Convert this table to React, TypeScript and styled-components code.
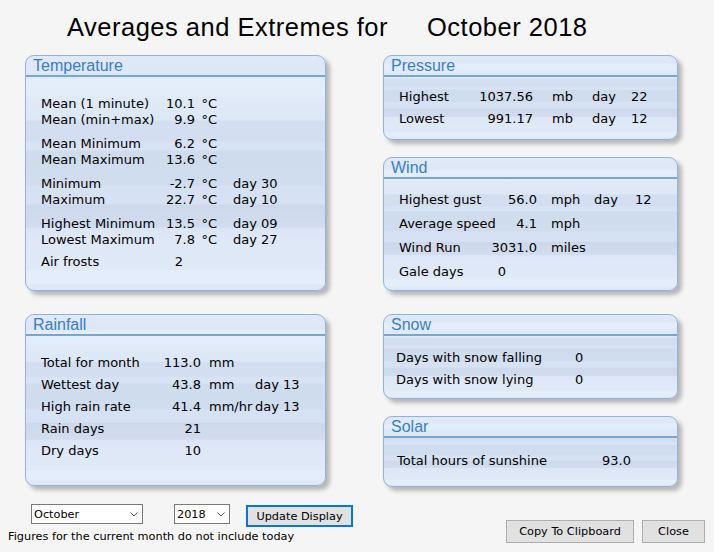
import React from "react";
import styled, { createGlobalStyle } from "styled-components";

const Global = createGlobalStyle`
  html, body { margin: 0; padding: 0; background: #f5f5f5; }
  body { font-family: "DejaVu Sans", Verdana, sans-serif; color: #000; }
  * { box-sizing: border-box; }
`;

const Page = styled.div`
  width: 714px;
  height: 552px;
  overflow: hidden;
`;

const Title = styled.h1`
  margin: 0;
  height: 55px;
  padding: 12px 0 0 67px;
  font-family: "Liberation Sans", Arial, sans-serif;
  font-weight: normal;
  font-size: 25.5px;
  line-height: 30px;
  letter-spacing: 0.5px;
  white-space: nowrap;
  color: #000;
`;

const TitleDate = styled.span`
  margin-left: 39px;
`;

const Columns = styled.div`
  display: grid;
  grid-template-columns: 301px 295px;
  column-gap: 57px;
  padding-left: 25px;
  align-items: start;
`;

const Column = styled.div`
  display: flex;
  flex-direction: column;
  gap: 23px;
`;

const Stack = styled.div`
  display: flex;
  flex-direction: column;
  gap: 17px;
`;

const Panel = styled.section<{ $h: number }>`
  height: ${(p) => p.$h}px;
  border: 1px solid #8db3df;
  border-radius: 9px;
  overflow: hidden;
  box-shadow: 4px 4px 4px rgba(0, 0, 0, 0.26);
  background: linear-gradient(
    180deg,
    #e0e9f8 0%,
    #dde7f6 8%,
    #e4eefa 10%,
    #e1edf9 17%,
    #dfe9f8 18%,
    #dde8f7 27%,
    #d3dff0 28%,
    #d3dff0 36%,
    #d8e3f5 37%,
    #d8e3f5 40%,
    #cfdcee 41%,
    #d0ddee 55%,
    #d6e2f4 56%,
    #d6e2f4 63%,
    #cdd9eb 64%,
    #d1ddef 73%,
    #dbe6f6 74%,
    #dfe8f7 80%,
    #e0e9f8 91%,
    #e3eefa 92%,
    #e3eefa 97%,
    #dfe8f7 98%
  );
`;

const PanelHead = styled.h2`
  margin: 0;
  height: 21px;
  padding-left: 7px;
  border-bottom: 2px solid #76a6d3;
  font-family: "Liberation Sans", Arial, sans-serif;
  font-weight: normal;
  font-size: 16px;
  line-height: 19px;
  color: #3a7ec4;
  white-space: nowrap;
`;

const PanelBody = styled.div<{ $pt: number; $pl: number }>`
  padding: ${(p) => p.$pt}px 0 0 ${(p) => p.$pl}px;
  font-size: 13px;
  color: #000;
`;

const Row = styled.div<{ $cols: string; $h: number; $gap?: number }>`
  display: grid;
  grid-template-columns: ${(p) => p.$cols};
  height: ${(p) => p.$h}px;
  line-height: ${(p) => p.$h}px;
  margin-top: ${(p) => p.$gap ?? 0}px;
  white-space: nowrap;
`;

const Cell = styled.span<{ $right?: boolean; $pl?: number; $pr?: number }>`
  text-align: ${(p) => (p.$right ? "right" : "left")};
  padding-left: ${(p) => p.$pl ?? 0}px;
  padding-right: ${(p) => p.$pr ?? 0}px;
`;

const Footer = styled.div`
  display: flex;
  justify-content: space-between;
  align-items: flex-start;
  margin-top: 17px;
  padding: 0 9px 0 8px;
`;

const FooterLeft = styled.div`
  display: flex;
  flex-direction: column;
`;

const Controls = styled.div`
  display: flex;
  align-items: flex-start;
  margin-left: 23px;
`;

const SelectWrap = styled.div<{ $w: number; $mr: number }>`
  position: relative;
  width: ${(p) => p.$w}px;
  height: 20px;
  margin-right: ${(p) => p.$mr}px;
`;

const NativeSelect = styled.select`
  appearance: none;
  -webkit-appearance: none;
  display: block;
  width: 100%;
  height: 100%;
  margin: 0;
  border: 1px solid #7a7a7a;
  border-radius: 0;
  background: #fff;
  padding: 0 0 0 2px;
  font-family: "DejaVu Sans", Verdana, sans-serif;
  font-size: 11.3px;
  color: #000;
  outline: none;
`;

const Chevron = styled.svg`
  position: absolute;
  right: 5px;
  top: 8px;
  width: 8px;
  height: 5px;
  pointer-events: none;
`;

const Button = styled.button<{ $w: number; $focus?: boolean }>`
  display: block;
  width: ${(p) => p.$w}px;
  height: ${(p) => (p.$focus ? 22 : 23)}px;
  margin: ${(p) => (p.$focus ? "1px 0 0 0" : "0")};
  padding: 0;
  border: ${(p) => (p.$focus ? "2px solid #0078d7" : "1px solid #adadad")};
  background: #e1e1e1;
  font-family: "DejaVu Sans", Verdana, sans-serif;
  font-size: 11.3px;
  color: #000;
  white-space: nowrap;
`;

const Note = styled.div`
  margin-top: 3px;
  font-size: 11.3px;
  line-height: 14px;
  white-space: nowrap;
`;

const RightButtons = styled.div`
  display: flex;
  gap: 8px;
  margin-top: 16px;
`;

type Line = { cells: string[]; gap?: number; pr?: number };

type Spec = {
  title: string;
  h: number;
  pt: number;
  pl: number;
  rowH: number;
  cols: string;
  unitPl: number;
  valueRight: boolean;
  lines: Line[];
};

const temperature: Spec = {
  title: "Temperature",
  h: 236,
  pt: 19,
  pl: 15,
  rowH: 16,
  cols: "110px 44px 38px auto",
  unitPl: 6.5,
  valueRight: true,
  lines: [
    { cells: ["Mean (1 minute)", "10.1", "°C"] },
    { cells: ["Mean (min+max)", "9.9", "°C"] },
    { cells: ["Mean Minimum", "6.2", "°C"], gap: 8 },
    { cells: ["Mean Maximum", "13.6", "°C"] },
    { cells: ["Minimum", "-2.7", "°C", "day 30"], gap: 8 },
    { cells: ["Maximum", "22.7", "°C", "day 10"] },
    { cells: ["Highest Minimum", "13.5", "°C", "day 09"], gap: 8 },
    { cells: ["Lowest Maximum", "7.8", "°C", "day 27"] },
    { cells: ["Air frosts", "2"], gap: 6, pr: 12 },
  ],
};

const rainfall: Spec = {
  title: "Rainfall",
  h: 172,
  pt: 16,
  pl: 15,
  rowH: 22,
  cols: "110px 50px 54px auto",
  unitPl: 8,
  valueRight: true,
  lines: [
    { cells: ["Total for month", "113.0", "mm"] },
    { cells: ["Wettest day", "43.8", "mm", "day 13"] },
    { cells: ["High rain rate", "41.4", "mm/hr", "day 13"] },
    { cells: ["Rain days", "21"] },
    { cells: ["Dry days", "10"] },
  ],
};

const pressure: Spec = {
  title: "Pressure",
  h: 85,
  pt: 9,
  pl: 15,
  rowH: 22,
  cols: "76px 58px 59px 39px auto",
  unitPl: 19,
  valueRight: true,
  lines: [
    { cells: ["Highest", "1037.56", "mb", "day", "22"] },
    { cells: ["Lowest", "991.17", "mb", "day", "12"] },
  ],
};

const wind: Spec = {
  title: "Wind",
  h: 134,
  pt: 9,
  pl: 15,
  rowH: 24,
  cols: "88px 50px 57px 41px auto",
  unitPl: 14,
  valueRight: true,
  lines: [
    { cells: ["Highest gust", "56.0", "mph", "day", "12"] },
    { cells: ["Average speed", "4.1", "mph"] },
    { cells: ["Wind Run", "3031.0", "miles"] },
    { cells: ["Gale days", "0"], pr: 31 },
  ],
};

const snow: Spec = {
  title: "Snow",
  h: 85,
  pt: 11,
  pl: 12,
  rowH: 22,
  cols: "179px auto",
  unitPl: 0,
  valueRight: false,
  lines: [
    { cells: ["Days with snow falling", "0"] },
    { cells: ["Days with snow lying", "0"] },
  ],
};

const solar: Spec = {
  title: "Solar",
  h: 71,
  pt: 12,
  pl: 13,
  rowH: 22,
  cols: "205px auto",
  unitPl: 0,
  valueRight: false,
  lines: [{ cells: ["Total hours of sunshine", "93.0"] }],
};

function StatPanel({ spec }: { spec: Spec }) {
  return (
    <Panel $h={spec.h}>
      <PanelHead>{spec.title}</PanelHead>
      <PanelBody $pt={spec.pt} $pl={spec.pl}>
        {spec.lines.map((line, i) => (
          <Row key={i} $cols={spec.cols} $h={spec.rowH} $gap={line.gap}>
            <Cell>{line.cells[0]}</Cell>
            <Cell $right={spec.valueRight} $pr={line.pr}>
              {line.cells[1]}
            </Cell>
            {line.cells[2] !== undefined && <Cell $pl={spec.unitPl}>{line.cells[2]}</Cell>}
            {line.cells[3] !== undefined && <Cell>{line.cells[3]}</Cell>}
            {line.cells[4] !== undefined && <Cell>{line.cells[4]}</Cell>}
          </Row>
        ))}
      </PanelBody>
    </Panel>
  );
}

function Select({ w, mr, value, options }: { w: number; mr: number; value: string; options: string[] }) {
  return (
    <SelectWrap $w={w} $mr={mr}>
      <NativeSelect defaultValue={value}>
        {options.map((o) => (
          <option key={o} value={o}>
            {o}
          </option>
        ))}
      </NativeSelect>
      <Chevron viewBox="0 0 8 5">
        <path d="M0.5 0.5 L4 4 L7.5 0.5" fill="none" stroke="#5a5a5a" strokeWidth="1" />
      </Chevron>
    </SelectWrap>
  );
}

const months = [
  "January",
  "February",
  "March",
  "April",
  "May",
  "June",
  "July",
  "August",
  "September",
  "October",
  "November",
  "December",
];

export default function App() {
  return (
    <Page>
      <Global />
      <Title>
        Averages and Extremes for<TitleDate>October 2018</TitleDate>
      </Title>
      <Columns>
        <Column>
          <StatPanel spec={temperature} />
          <StatPanel spec={rainfall} />
        </Column>
        <Column>
          <Stack>
            <StatPanel spec={pressure} />
            <StatPanel spec={wind} />
          </Stack>
          <Stack>
            <StatPanel spec={snow} />
            <StatPanel spec={solar} />
          </Stack>
        </Column>
      </Columns>
      <Footer>
        <FooterLeft>
          <Controls>
            <Select w={112} mr={31} value="October" options={months} />
            <Select w={56} mr={16} value="2018" options={["2016", "2017", "2018"]} />
            <Button $w={107} $focus>
              Update Display
            </Button>
          </Controls>
          <Note>Figures for the current month do not include today</Note>
        </FooterLeft>
        <RightButtons>
          <Button $w={128}>Copy To Clipboard</Button>
          <Button $w={63}>Close</Button>
        </RightButtons>
      </Footer>
    </Page>
  );
}
